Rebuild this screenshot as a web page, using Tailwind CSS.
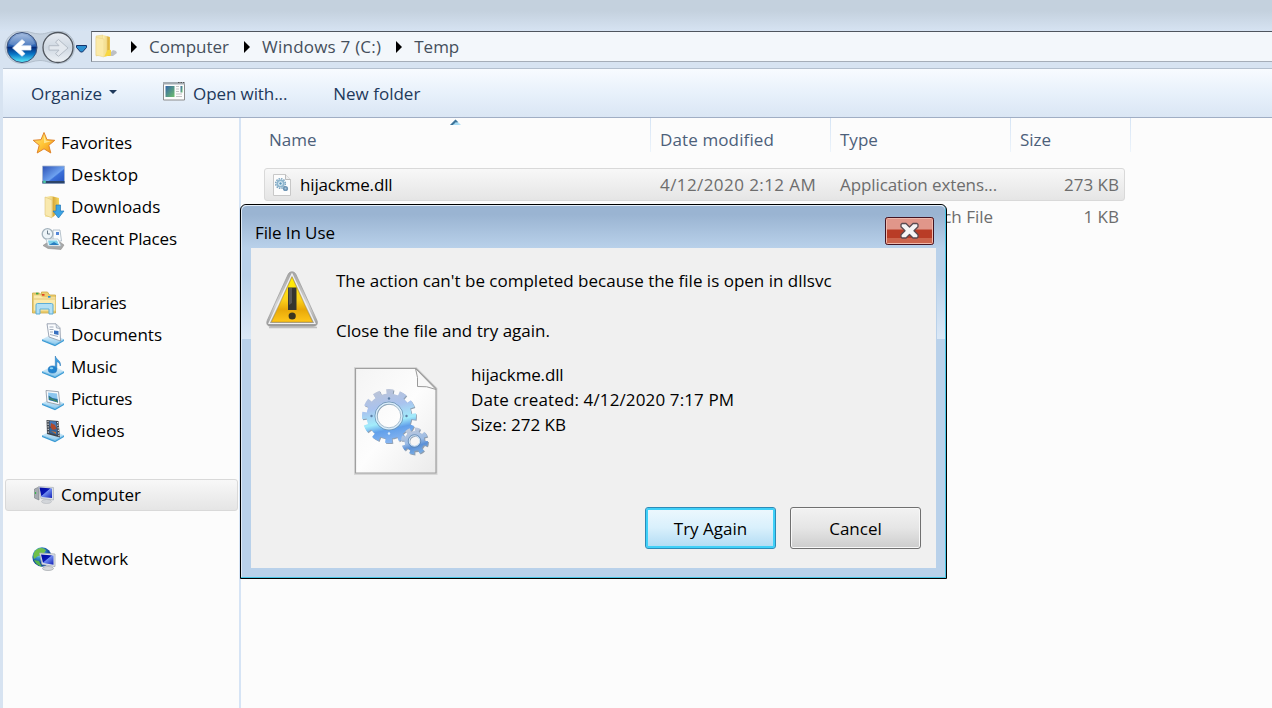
<!DOCTYPE html>
<html lang="en">
<head>
<meta charset="utf-8">
<title>Temp</title>
<script src="https://cdn.jsdelivr.net/npm/@tailwindcss/browser@4"></script>
</head>
<body class="w-[1272px] h-[708px] overflow-hidden bg-[#d7e3f1] font-['Open_Sans','Noto_Sans',sans-serif] text-[17px] leading-6 whitespace-nowrap">
<svg class="absolute w-0 h-0" aria-hidden="true">
  <defs>
    <linearGradient id="blueBall" x2="0" y2="1"><stop stop-color="#9cb6dc"/><stop offset=".45" stop-color="#2b62b3"/><stop offset=".5" stop-color="#062c7c"/><stop offset=".72" stop-color="#0875c6"/><stop offset="1" stop-color="#5cf0fc"/></linearGradient>
    <linearGradient id="grayBall" x2="0" y2="1"><stop stop-color="#e9edf3"/><stop offset=".5" stop-color="#cfd8e2"/><stop offset="1" stop-color="#eef2f6"/></linearGradient>
    <linearGradient id="folder" x2="1" y2="0"><stop stop-color="#fdf0b4"/><stop offset=".5" stop-color="#f0d680"/><stop offset=".6" stop-color="#d9ac3c"/><stop offset="1" stop-color="#f5d762"/></linearGradient>
    <linearGradient id="star" x2="1" y2="1"><stop stop-color="#ffe680"/><stop offset=".5" stop-color="#ffc638"/><stop offset="1" stop-color="#f08a10"/></linearGradient>
    <linearGradient id="desk" x2="1" y2="1"><stop stop-color="#2b50b4"/><stop offset=".55" stop-color="#6ea2f0"/><stop offset=".6" stop-color="#3c70d8"/><stop offset="1" stop-color="#2450c0"/></linearGradient>
    <linearGradient id="scr" x2="1" y2="1"><stop stop-color="#0008a0"/><stop offset=".45" stop-color="#0a18b4"/><stop offset=".5" stop-color="#6f8cf0"/><stop offset="1" stop-color="#1220b8"/></linearGradient>
    <linearGradient id="tray" x2="0" y2="1"><stop stop-color="#e2f3fc"/><stop offset="1" stop-color="#8cc8ec"/></linearGradient>
    <linearGradient id="yellow" x2="0" y2="1"><stop stop-color="#fff200"/><stop offset=".5" stop-color="#fcd21c"/><stop offset=".72" stop-color="#e8a808"/><stop offset="1" stop-color="#ffc61a"/></linearGradient>
    <linearGradient id="silver" x2="0" y2="1"><stop stop-color="#a4a4a4"/><stop offset=".6" stop-color="#d6d6d6"/><stop offset="1" stop-color="#9a9a9a"/></linearGradient>
    <linearGradient id="page" x2="1" y2="1"><stop stop-color="#f4f4f4"/><stop offset=".5" stop-color="#fdfdfd"/><stop offset="1" stop-color="#ebebeb"/></linearGradient>
    <linearGradient id="gear" gradientUnits="userSpaceOnUse" x1="-6" y1="-27" x2="6" y2="27"><stop stop-color="#bcc4d6"/><stop offset=".32" stop-color="#a9c2ee"/><stop offset=".6" stop-color="#a2ecfb"/><stop offset=".74" stop-color="#62a0ea"/><stop offset="1" stop-color="#8cb8f2"/></linearGradient>
    <linearGradient id="gear2" gradientUnits="userSpaceOnUse" x1="-4" y1="-13" x2="4" y2="13"><stop stop-color="#c0c9da"/><stop offset=".5" stop-color="#9dbde6"/><stop offset=".7" stop-color="#5b90d6"/><stop offset="1" stop-color="#7cb0e6"/></linearGradient>
    <linearGradient id="appwin" x2="1" y2="1"><stop stop-color="#3465a8"/><stop offset="1" stop-color="#6fbf6a"/></linearGradient>
    <radialGradient id="globe" cx=".35" cy=".3"><stop stop-color="#b8eaf8"/><stop offset=".5" stop-color="#3a94d0"/><stop offset="1" stop-color="#124a9a"/></radialGradient>
    <symbol id="libTray" viewBox="0 0 24 24"><path d="M1 16.500 9 12h6l8 4.500-9 5z" fill="url(#tray)"/><path d="m1 16.500 13 5 9-5v1.600L14 23.300 1 18z" fill="#3a9ad4"/><path d="m1 16.500 13 5 9-5" fill="none" stroke="#6fb9e4" stroke-width=".7"/></symbol>
  </defs>
</svg>

<div class="h-full flex flex-col">
  <!-- title strip -->
  <div class="h-[31px] shrink-0 bg-linear-to-b from-[#c4d1de] from-35% to-[#d6e3f2]"></div>

  <!-- address bar -->
  <div class="h-[37px] shrink-0 flex">
    <svg class="w-[91px] h-[34px] shrink-0" viewBox="0 31 91 34">
      <path d="M22 31C13 31 5 38 5 47s7 16.500 17 16.500c7 0 11-3 18-3s10 3 18 3c10 0 16.500-7 16.500-16.500S67 31 58 31c-8 0-11 3-18 3s-11-3-18-3z" fill="#c6d2df" stroke="#b3bfcc"/>
      <circle cx="22" cy="47.500" r="15" fill="url(#blueBall)" stroke="#3a4f78"/>
      <path d="M9 44a13.500 13.500 0 0 1 26 0q-13 5-26 0z" fill="#fff" opacity=".18"/>
      <path d="m12.500 48 9.500-8.500 3 2.500-3.500 3.700H31v4.400h-9.500l3.500 3.700-3 2.500z" fill="#fff" stroke="#dce6f4" stroke-width=".7" stroke-linejoin="round"/>
      <circle cx="58" cy="47.500" r="15" fill="url(#grayBall)" stroke="#50565e" stroke-width="1.300"/>
      <path d="m68 48-9.500-8.500-3 2.500 3.500 3.700H49v4.400h10l-3.500 3.700 3 2.500z" fill="#e3e8ee" stroke="#b4bcc6" stroke-linejoin="round"/>
      <path d="M76.500 45.500h10v2L82.500 52h-2l-4-4.500z" fill="#2b8fd0" stroke="#16346c"/>
    </svg>
    <div class="h-[31px] flex-1 flex items-center bg-[#f3f7fb] border-l border-t border-b border-t-[#4e555e] border-l-[#7b838c] border-b-[#a5adb8] text-[#454f5b]">
      <svg class="w-6 h-6 ml-[2px] -mt-0.5" viewBox="0 0 24 24">
        <path d="m13 22 6-6 3 1 1 2-4 3z" fill="#000" opacity=".22"/>
        <path d="M2 2 9 1v19l-7 2z" fill="#f7e6a0" stroke="#e6cf80" stroke-width=".5"/>
        <path d="m9 1 7 2v12l1 7H9z" fill="url(#folder)"/><path d="M2 3.500 10 5v18l-8-2z" fill="#fbeaa8" stroke="#e8d084" stroke-width=".5"/><path d="M13.500 16H17v5l-7 2z" fill="#f8d740"/>
      </svg>
      <svg class="w-1.5 h-3 ml-[13px]" viewBox="0 0 6 12"><path d="M0 0v12l6-6z"/></svg>
      <span class="ml-3">Computer</span>
      <svg class="w-1.5 h-3 ml-[15px]" viewBox="0 0 6 12"><path d="M0 0v12l6-6z"/></svg>
      <span class="ml-3 tracking-[0.22px]">Windows 7 (C:)</span>
      <svg class="w-1.5 h-3 ml-[15px]" viewBox="0 0 6 12"><path d="M0 0v12l6-6z"/></svg>
      <span class="ml-3">Temp</span>
    </div>
  </div>

  <!-- command bar -->
  <div class="h-[50px] shrink-0 ml-[3px] flex items-center border-t border-b border-t-[#b3bfce] border-b-[#a0aec4] bg-linear-to-b from-[#f8fbff] via-[#e8f1fb] via-50% to-[#dae6f4] text-[#1e395b]">
    <span class="ml-7 pt-0.5">Organize</span>
    <svg class="w-2 h-1 ml-[7px] -mt-0.5" viewBox="0 0 8 4"><path d="M0 0h8L4 4z" fill="#1e395b"/></svg>
    <svg class="w-6 h-5 ml-[45px] -mt-1" viewBox="0 0 24 20">
      <path d="M1.500 1.500h21v17.500h-21z" fill="#fcfcfc" stroke="#8c8c8c"/><path d="M1 1h22v2.500H1z" fill="#a3abb2"/><path d="M16 1.500h1.500M18.500 1.500H20M21 1.500h1" stroke="#555"/>
      <path d="M3.500 5h9v11h-9z" fill="url(#appwin)"/><path d="M14 5.500h3M14 8h3M14 10.500h3M14 13h6M14 15.500h6" stroke="#c2c2c2"/><path d="M18.500 5h2v6.500h-2z" fill="url(#appwin)"/>
    </svg>
    <span class="ml-[7px] pt-0.5 tracking-[-0.1px]">Open with...</span>
    <span class="ml-[46px] pt-0.5">New folder</span>
  </div>

  <div class="flex-1 min-h-0 ml-[3px] flex bg-[#fcfcfc]">
    <!-- navigation pane -->
    <nav class="w-[238px] shrink-0 border-r-2 border-[#d6e4f5] pt-[9px] text-black">
      <div class="h-8 flex items-center pl-[29px] gap-[5px]">
        <svg class="w-6 h-6" viewBox="0 0 24 24"><path d="m12 1.500 3 7.200 7.800.6-6 5 2 7.700-6.800-4.200L5.200 22l2-7.700-6-5L9 8.700z" fill="url(#star)" stroke="#e0842a" stroke-linejoin="round"/><path d="m12 4 2 5.700 5 .5-7 2z" fill="#fff4b0" opacity=".7"/></svg>
        <span class="tracking-[-0.1px]">Favorites</span>
      </div>
      <div class="h-8 flex items-center pl-[38px] gap-[6px]">
        <svg class="w-6 h-6" viewBox="0 0 24 24"><path d="M1.500 3h22v17.500h-22z" fill="url(#desk)" stroke="#a9b9cf" stroke-width=".8"/><path d="M1.500 18h22v2.300h-22z" fill="#2c4468"/><circle cx="3.500" cy="18.800" r="1.500" fill="#4cc4a4"/></svg>
        <span class="tracking-[0.25px]">Desktop</span>
      </div>
      <div class="h-8 flex items-center pl-[38px] gap-[6px]">
        <svg class="w-6 h-6" viewBox="0 0 24 24"><path d="m4 2 6-1 8 2v14l-6 5H4z" fill="url(#folder)"/><path d="m4 2 7 3v18l-7-3z" fill="#f9e9ae" stroke="#dcc47a" stroke-width=".6"/><path d="M15 10h4.500v6H23l-5.500 7-5.500-7h3z" fill="#3ba4e4" stroke="#2378b8" stroke-width=".7"/></svg>
        <span class="tracking-[0.1px]">Downloads</span>
      </div>
      <div class="h-8 flex items-center pl-[38px] gap-[6px]">
        <svg class="w-6 h-6" viewBox="0 0 24 24"><path d="m2 18.500 5-3.500h12l4 3-3 4.500-13-1z" fill="#a8a8a8" stroke="#858585" stroke-width=".5"/><path d="M12 3h7l1.500 11H12z" fill="#f8fafc" stroke="#9aabb8" stroke-width=".7"/><path d="M15 5h3v3h-3z" fill="#5486d8"/><circle cx="6.500" cy="7" r="5.300" fill="#edf4f8" stroke="#a3b2bc" stroke-width="1.300"/><path d="M6.500 3.500V7H9" fill="none" stroke="#6b7d8b"/><path d="M5 12h12l3 7H7z" fill="#f7fbfd" stroke="#a7b8c1" stroke-width=".7"/><path d="M7 13.500h9l2 4.500H8z" fill="#7fd2ea"/><path d="m8 18 5-3 5 3z" fill="#2a7ec0"/></svg>
        <span class="tracking-[-0.2px]">Recent Places</span>
      </div>

      <div class="h-8 mt-8 flex items-center pl-[29px] gap-[5px]">
        <svg class="w-6 h-6" viewBox="0 0 24 24"><path d="M.5 2h7l2 2V1h6l2 3h6v18H.5z" fill="#edcf70" stroke="#cca848" stroke-width=".8"/><path d="M1.500 4h7l2 2h13v14h-22z" fill="#fbeaad" stroke="#e0c26a" stroke-width=".6"/><path d="M1.500 8h22" stroke="#e3c779"/><path d="M4 1.700h2.500v1.700H4z" fill="#3da446"/><path d="M10 3h2.500v1.700H10z" fill="#e04226"/><path d="M16 5h2.500v1.700H16z" fill="#2a90d8"/><path d="M4 14q0-1.500 1.500-1.500h14Q21 12.500 21 14v9h-4v-5H8v5H4z" fill="#b2dff4" stroke="#5cadd6"/></svg>
        <span class="tracking-[-0.4px]">Libraries</span>
      </div>
      <div class="h-8 flex items-center pl-[38px] gap-[6px]">
        <svg class="w-6 h-6" viewBox="0 0 24 24"><use href="#libTray"/><path d="M6 .8h9l4 4L19.500 18 8 14z" fill="#fafcfe" stroke="#8792a3" stroke-width=".8"/><path d="m15 1 .4 4 3.600.5" fill="#dde3ea" stroke="#8792a3" stroke-width=".6"/><path d="M8.500 4h4M8.500 6.500h4M9 9h3M9 11.500l8 2" stroke="#9aa5b5" stroke-width=".9"/><path d="m13 7.500 4.500.5v4l-4.500-1z" fill="#3870c0"/></svg>
        <span>Documents</span>
      </div>
      <div class="h-8 flex items-center pl-[38px] gap-[6px]">
        <svg class="w-6 h-6" viewBox="0 0 24 24"><use href="#libTray"/><ellipse cx="11.500" cy="14.500" rx="4.300" ry="3.600" fill="#2184d0" stroke="#176ab0" stroke-width=".5"/><path d="M14.300 14V1c1 4 6.200 4.500 5 10-.5-3-2-4-3.500-4.200V14z" fill="#3b9de0" stroke="#1d6eb2" stroke-width=".5"/><ellipse cx="10.500" cy="13.300" rx="1.800" ry="1" fill="#8dd4f6"/></svg>
        <span>Music</span>
      </div>
      <div class="h-8 flex items-center pl-[38px] gap-[6px]">
        <svg class="w-6 h-6" viewBox="0 0 24 24"><use href="#libTray"/><path d="m5 3.500 12.500 1.200L19 18 6 15z" fill="#f8fafc" stroke="#949da9" stroke-width=".9"/><path d="m7 5.500 9 .9 1 9L7.800 13z" fill="#8cc6ee"/><path d="m7.500 8.500 4 2.500 5 1 .5 3.400L7.800 13z" fill="#28709a"/><path d="m8 11 8.500 3.800" stroke="#4f8f48"/></svg>
        <span class="tracking-[-0.35px]">Pictures</span>
      </div>
      <div class="h-8 flex items-center pl-[38px] gap-[6px]">
        <svg class="w-6 h-6" viewBox="0 0 24 24"><use href="#libTray"/><path d="m5.500 1 12 1L19 18.500 6 15z" fill="#3f444b"/><path d="m8.500 2 6.500.5 1 6L8.500 7.500z" fill="#4679b8"/><path d="m8.500 8.500 7.500 1 .7 6.500-8.200-2z" fill="#36649a"/><path d="m10 4 4 2 1.500 4-4 1-2-3z" fill="#b04a2c"/><path d="m10 12 5 1v2z" fill="#c4702f"/><path d="m7 2 .3 13M16.500 3l1.500 14.500" stroke="#e4e8ec" stroke-width="1.100" stroke-dasharray="1.300 1.300"/></svg>
        <span class="tracking-[0.2px]">Videos</span>
      </div>

      <div class="h-8 mt-8 ml-0.5 mr-[1px] flex items-center pl-[26px] gap-[5px] border border-[#d9d9d9] rounded-[3px] bg-linear-to-b from-[#f8f8f8] to-[#e5e5e5]">
        <svg class="w-6 h-6" viewBox="0 0 24 24"><path d="m2.500 6 4.500-2v13l-4.500-2z" fill="#a5aab0" stroke="#777e85" stroke-width=".6"/><path d="M3.500 9v2" stroke="#37b44a" stroke-width="1.200"/><path d="m6.500 3.500 15 1v12.500L9 15.500z" fill="#dadfe5" stroke="#b0b6be" stroke-width=".8"/><path d="m7.500 4.500 12.500.9v9.700L9.500 14z" fill="url(#scr)"/><ellipse cx="14.500" cy="18.500" rx="5" ry="2" fill="#d3d6da" stroke="#b3b7bc" stroke-width=".6"/></svg>
        <span>Computer</span>
      </div>
      <div class="h-8 mt-8 flex items-center pl-[29px] gap-[5px]">
        <svg class="w-6 h-6" viewBox="0 0 24 24"><circle cx="10" cy="10" r="9.700" fill="url(#globe)"/><path d="M4 3q5-4 10 0l-3 5-5 1-4 3Q0 6 4 3z" fill="#6fc04a"/><path d="m2 13 5 1 3 6Q4 18 2 13z" fill="#57b44e"/><path d="m7.500 6 15.500 1v12.500L10 17.500z" fill="#e2e6ea" stroke="#a3abb4" stroke-width=".8"/><path d="m9 7.500 12.500.9v9.300L11 16z" fill="url(#scr)"/><ellipse cx="16" cy="21.500" rx="5.500" ry="2" fill="#d6d9dc" stroke="#999ea3" stroke-width=".6"/></svg>
        <span class="tracking-[-0.1px]">Network</span>
      </div>
    </nav>

    <!-- file list -->
    <main class="flex-1">
      <div class="h-[50px] flex text-[#4c607a]">
        <div class="w-[409px] pl-7 pt-[10px]">Name</div>
        <div class="w-px h-[34px] bg-linear-to-b from-[#d5e4f5] to-[#edf4fb]"></div>
        <div class="w-[179px] pl-[9px] pt-[10px] tracking-[0.12px]">Date modified</div>
        <div class="w-px h-[34px] bg-linear-to-b from-[#d5e4f5] to-[#edf4fb]"></div>
        <div class="w-[179px] pl-[9px] pt-[10px]">Type</div>
        <div class="w-px h-[34px] bg-linear-to-b from-[#d5e4f5] to-[#edf4fb]"></div>
        <div class="w-[119px] pl-[9px] pt-[10px]">Size</div>
        <div class="w-px h-[34px] bg-linear-to-b from-[#d5e4f5] to-[#edf4fb]"></div>
      </div>
      <div class="ml-[23px] w-[861px] h-[33px] flex items-center border border-[#d9d9d9] rounded-[3px] bg-linear-to-b from-[#f8f8f8] to-[#e5e5e5] text-[#6d6d6d]">
        <svg class="w-[18px] h-[22px] ml-2" viewBox="0 0 18 22"><path d="M.5.500h12l5 5v16H.5z" fill="#fcfcfc" stroke="#c8c8c8"/><path d="M12.500.500v5h5" fill="#eee" stroke="#bbb"/><circle cx="7.500" cy="9.500" r="4.800" fill="none" stroke="#7ba4c0" stroke-width="1.600" stroke-dasharray="1.500 1"/><circle cx="7.500" cy="9.500" r="3.200" fill="#e6f3fa" stroke="#8fb6ce" stroke-width="1.800"/><circle cx="7.500" cy="9.500" r="1.200" fill="#5d96b8"/><circle cx="12.500" cy="14.500" r="1.800" fill="#a4c3d9" stroke="#6f95b4" stroke-width="1.600"/></svg>
        <span class="ml-[9px] w-[360px] pt-px text-black tracking-[-0.15px]">hijackme.dll</span>
        <span class="w-[180px] pt-px tracking-[0.42px]">4/12/2020 2:12 AM</span>
        <span class="w-[160px] pt-px tracking-[-0.1px]">Application extens...</span>
        <span class="flex-1 pt-px pr-[5px] text-right">273 KB</span>
      </div>
      <div class="ml-[23px] w-[861px] h-8 flex items-center pl-[576px] text-[#6d6d6d]">
        <span class="w-[153px] text-right">Windows Batch File</span>
        <span class="flex-1 pr-[6px] text-right">1 KB</span>
      </div>
    </main>
  </div>
</div>

<!-- sort indicator over the Name header -->
<svg class="absolute left-[450px] top-[119px] w-[11px] h-[6px]" viewBox="0 0 11 6"><path d="M0 6 5.500.500 11 6z" fill="#b4e0f4"/><path d="M0 6 5.500.500 8 3 3 6z" fill="#3f7398"/><path d="M3 6 6 3 9.500 6z" fill="#a6dcf5"/></svg>

<!-- File In Use dialog -->
<section class="absolute left-[240px] top-[204px] w-[707px] h-[375px] flex flex-col rounded-t-[6px] border border-black bg-[#b9d1ea] shadow-[inset_-1px_-1px_0_#46c4e4,inset_1px_1px_0_#dfeaf5]">
  <header class="h-[43px] shrink-0 m-px mb-0 -mt-0 mr-px rounded-t-[5px] flex bg-linear-to-b from-[#9ab4d2] from-20% to-[#b9d1ea] text-black border-t border-[#e4eef8]">
    <span class="ml-[13px] mt-[15px] tracking-[-0.1px]">File In Use</span>
    <svg class="w-[49px] h-[28px] ml-auto mr-[11px] mt-[11px]" viewBox="0 0 49 28">
      <rect x=".5" y=".5" width="48" height="27" rx="2" fill="#b93c26" stroke="#431422"/>
      <path d="M2 2h45v10.500H2z" fill="#e0968a"/><path d="M2 21h45v5H2z" fill="#cc644c"/>
      <rect x="1.500" y="1.500" width="46" height="25" rx="1" fill="none" stroke="#f0b9ac"/>
      <path d="M17 6.500h4L24.500 10 28 6.500h4l1 1v2.200l-4 4 4 4V20l-1 1h-4l-3.500-3.500L21 21h-4l-1-1v-2.300l4-4-4-4V7.500z" fill="#f5f5f5" stroke="#5a4a50" stroke-width="1.300" stroke-linejoin="round"/>
    </svg>
  </header>
  <div class="flex-1 min-h-0 flex">
    <div class="w-[10px] flex flex-col"><div class="ml-px h-[91px] bg-linear-to-b from-[#b9d1ea] from-30% to-[#dbe8f6]"></div></div>
    <div class="w-[685px] h-[320px] flex flex-col bg-[#f0f0f0] text-black">
      <div class="h-[104px] flex">
        <svg class="w-[54px] h-[58px] ml-[14px] mt-[23px]" viewBox="0 0 54 58">
          <path d="M4 56.500h48" stroke="#000" opacity=".2" stroke-width="1.500"/>
          <path d="M27 .8c2 0 3.200 1 4 2.700l21 46c1.200 3-.2 5.700-3.500 5.700h-43C2.200 55.200 1 52.500 2.200 49.500L23 3.500c.8-1.700 2-2.700 4-2.700z" fill="url(#silver)" stroke="#9a9a9a" stroke-width=".7"/>
          <path d="M27 3 50 52.500H4z" fill="none" stroke="#f1f1f1" stroke-width="1.200"/>
          <path d="m27 6 20.500 45h-41z" fill="url(#yellow)" stroke="#bf9520" stroke-width=".6"/>
          <path d="M23 16.500h8.500V39H23z" fill="#35352f"/><path d="M23.500 17h3.500v15l-3 2z" fill="#666" opacity=".7"/><circle cx="27.200" cy="45" r="3.600" fill="#3b3520"/>
        </svg>
        <div class="ml-[17px] pt-[21px]">
          <p>The action can't be completed because the file is open in dllsvc</p>
          <p class="mt-[26px]">Close the file and try again.</p>
        </div>
      </div>
      <div class="h-[155px] flex">
        <svg class="w-[84px] h-[108px] ml-[103px] mt-[15px]" viewBox="0 0 84 108">
          <path d="M1.500 1.500h60.500l20 20v85H1.500z" fill="none" stroke="#000" opacity=".1" stroke-width="3"/>
          <path d="M1.500 1.500h60.500l20 20v84.500H1.500z" fill="url(#page)" stroke="#a0a0a0" stroke-width="1.200"/>
          <path d="M61.500 1.500q3 9 2 18 9-1 18.500 3z" fill="#f8f8f8" stroke="#9a9a9a"/>
          <!-- drop shadows of both gears -->
          <g fill="none" stroke="#3c5878" opacity=".55">
            <circle cx="35.900" cy="50" r="17.500" stroke-width="10"/><circle cx="35.900" cy="50" r="24.300" stroke-width="5.400" stroke-dasharray="6.900 5.823" stroke-dashoffset="3.450"/>
            <circle cx="61.500" cy="75" r="7.800" stroke-width="5"/><circle cx="61.500" cy="75" r="11.500" stroke-width="4" stroke-dasharray="4.600 4.432"/>
          </g>
          <g transform="translate(35 49)" fill="none">
            <circle r="24.300" stroke="url(#gear)" stroke-width="5.400" stroke-dasharray="6.900 5.823" stroke-dashoffset="3.450"/>
            <circle r="17.500" stroke="url(#gear)" stroke-width="10"/>
            <circle r="14" stroke="#6d94b2"/><circle r="12.700" stroke="#dceefa" stroke-width="1.600"/><circle r="11.800" stroke="#86a5bb" stroke-width=".7"/>
            <g fill="#5d7fa5"><circle cy="-17.500" r="1.200"/><circle cx="17.500" r="1.200"/><circle cy="17.500" r="1.200" fill="#dceeff"/><circle cx="-17.500" r="1.200"/></g>
          </g>
          <g transform="translate(60.500 74)" fill="none">
            <circle r="11.500" stroke="url(#gear2)" stroke-width="4" stroke-dasharray="4.600 4.432"/>
            <circle r="7.600" stroke="url(#gear2)" stroke-width="5"/>
            <circle r="5.300" stroke="#d1e7f7"/><circle r="6.300" stroke="#5c82ac" stroke-width=".7"/>
          </g>
        </svg>
        <div class="ml-[33px] pt-[10px] leading-[25px]">
          <p class="tracking-[-0.15px]">hijackme.dll</p>
          <p class="tracking-[0.13px]">Date created: 4/12/2020 7:17 PM</p>
          <p>Size: 272 KB</p>
        </div>
      </div>
      <div class="flex justify-end gap-[14px] pr-[15px]">
        <button class="w-[131px] h-[42px] pt-0.5 rounded-[3px] border border-[#2c8bb8] bg-linear-to-b from-[#ebf7fd] from-5% via-[#d9f0fc] via-49% to-[#b0dbf3] shadow-[inset_0_0_0_2px_#3fd0f8]">Try Again</button>
        <button class="w-[131px] h-[42px] pt-0.5 rounded-[3px] border border-[#707070] bg-linear-to-b from-[#f2f2f2] via-[#e6e6e6] via-49% to-[#cdcdcd] shadow-[inset_0_0_0_1px_#f8f8f8]">Cancel</button>
      </div>
    </div>
    <div class="w-[10px] flex flex-col"><div class="mr-px ml-px h-[91px] bg-linear-to-b from-[#b9d1ea] from-30% to-[#dbe8f6]"></div></div>
  </div>
  <div class="h-[10px] shrink-0"></div>
</section>
</body>
</html>
